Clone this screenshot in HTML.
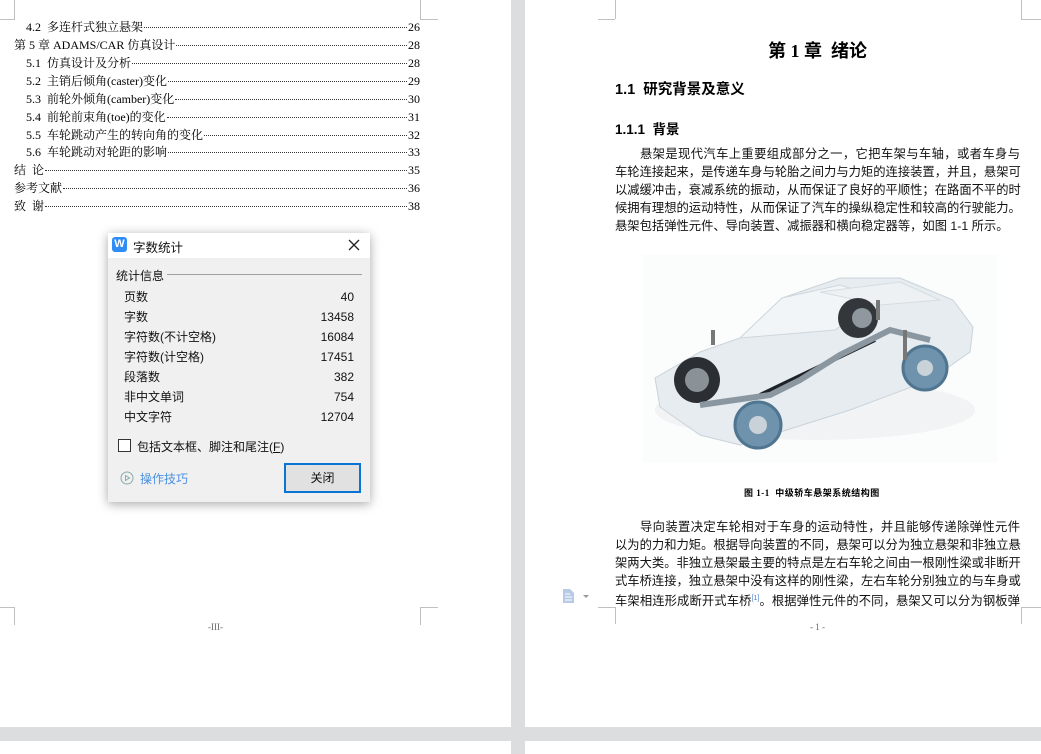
<!DOCTYPE html>
<html><head><meta charset="utf-8"><style>
*{margin:0;padding:0;box-sizing:border-box}
body{width:1041px;height:754px;overflow:hidden;background:#fff;position:relative;font-family:"Liberation Serif","Noto Serif CJK SC","Noto Sans CJK SC",serif;color:#000}
.a{position:absolute}
.ln{position:absolute;background:#c0c0c0}
.toc{position:absolute;font-size:12px;line-height:18px;height:18px;display:flex;align-items:baseline;white-space:nowrap}
.toc .d{flex:1;border-bottom:1px dotted #333;margin:0 1px;transform:translateY(-3px)}
.bl{position:absolute;left:615px;width:405px;font-size:12.3px;line-height:18px;height:18px;white-space:nowrap;text-align:justify;text-align-last:justify;font-family:"Liberation Sans","Noto Sans CJK SC",sans-serif;color:#111}
.dlg{position:absolute;left:108px;top:233px;width:262px;height:269px;background:#f0f0f0;box-shadow:0 2px 10px rgba(0,0,0,.35);font-family:"Liberation Sans","Noto Sans CJK SC",sans-serif;font-size:12px;color:#111}
.row{position:absolute;left:16px;width:230px;display:flex;justify-content:space-between;font-size:12px;line-height:14px}
</style></head><body>
<!-- gray separators -->
<div class="a" style="left:511px;top:0;width:14px;height:754px;background:#dcdddf"></div>
<div class="a" style="left:0;top:727px;width:1041px;height:14px;background:#dcdddf"></div>

<!-- left page corner marks -->
<div class="ln" style="left:0;top:19px;width:15px;height:1px"></div>
<div class="ln" style="left:14px;top:0;width:1px;height:19px"></div>
<div class="ln" style="left:420px;top:19px;width:18px;height:1px"></div>
<div class="ln" style="left:420px;top:0;width:1px;height:19px"></div>
<div class="ln" style="left:0;top:607px;width:15px;height:1px"></div>
<div class="ln" style="left:14px;top:607px;width:1px;height:18px"></div>
<div class="ln" style="left:420px;top:607px;width:18px;height:1px"></div>
<div class="ln" style="left:420px;top:607px;width:1px;height:18px"></div>
<div class="a" style="left:208px;top:622px;font-size:9px;color:#666">-III-</div>

<!-- TOC -->
<div class="toc" style="left:26px;top:18px;width:394px"><span>4.2&nbsp; 多连杆式独立悬架</span><span class="d"></span><span>26</span></div>
<div class="toc" style="left:14px;top:36px;width:406px"><span>第 5 章 ADAMS/CAR 仿真设计</span><span class="d"></span><span>28</span></div>
<div class="toc" style="left:26px;top:54px;width:394px"><span>5.1&nbsp; 仿真设计及分析</span><span class="d"></span><span>28</span></div>
<div class="toc" style="left:26px;top:72px;width:394px"><span>5.2&nbsp; 主销后倾角(caster)变化</span><span class="d"></span><span>29</span></div>
<div class="toc" style="left:26px;top:90px;width:394px"><span>5.3&nbsp; 前轮外倾角(camber)变化</span><span class="d"></span><span>30</span></div>
<div class="toc" style="left:26px;top:108px;width:394px"><span>5.4&nbsp; 前轮前束角(toe)的变化</span><span class="d"></span><span>31</span></div>
<div class="toc" style="left:26px;top:126px;width:394px"><span>5.5&nbsp; 车轮跳动产生的转向角的变化</span><span class="d"></span><span>32</span></div>
<div class="toc" style="left:26px;top:143px;width:394px"><span>5.6&nbsp; 车轮跳动对轮距的影响</span><span class="d"></span><span>33</span></div>
<div class="toc" style="left:14px;top:161px;width:406px"><span>结&nbsp; 论</span><span class="d"></span><span>35</span></div>
<div class="toc" style="left:14px;top:179px;width:406px"><span>参考文献</span><span class="d"></span><span>36</span></div>
<div class="toc" style="left:14px;top:197px;width:406px"><span>致&nbsp; 谢</span><span class="d"></span><span>38</span></div>

<!-- Dialog -->
<div class="dlg">
  <div class="a" style="left:0;top:0;width:262px;height:25px;background:#fff"></div>
  <div class="a" style="left:4px;top:4px;width:15px;height:15px;background:#2f8cf4;border-radius:3px;color:#fff;font-size:11px;font-weight:bold;line-height:15px;text-align:center;font-family:'Liberation Sans',sans-serif">W</div>
  <div class="a" style="left:25px;top:4px;font-size:12.5px">字数统计</div>
  <svg class="a" style="left:240px;top:6px" width="12" height="12"><path d="M1 1L11 11M11 1L1 11" stroke="#222" stroke-width="1.3"/></svg>
  <div class="a" style="left:8px;top:34px;font-size:12px">统计信息</div>
  <div class="a" style="left:59px;top:41px;width:195px;height:1px;background:#a0a0a0"></div>
  <div class="row" style="top:57px"><span>页数</span><span>40</span></div>
  <div class="row" style="top:77px"><span>字数</span><span>13458</span></div>
  <div class="row" style="top:97px"><span>字符数(不计空格)</span><span>16084</span></div>
  <div class="row" style="top:117px"><span>字符数(计空格)</span><span>17451</span></div>
  <div class="row" style="top:137px"><span>段落数</span><span>382</span></div>
  <div class="row" style="top:157px"><span>非中文单词</span><span>754</span></div>
  <div class="row" style="top:177px"><span>中文字符</span><span>12704</span></div>
  <div class="a" style="left:10px;top:206px;width:13px;height:13px;border:1px solid #333;background:#fff"></div>
  <div class="a" style="left:29px;top:205px;font-size:12px">包括文本框、脚注和尾注(<u>F</u>)</div>
  <svg class="a" style="left:12px;top:238px" width="14" height="14"><circle cx="7" cy="7" r="6" fill="none" stroke="#8aa" stroke-width="1"/><path d="M5.5 4.5L9.5 7L5.5 9.5Z" fill="none" stroke="#8aa"/></svg>
  <div class="a" style="left:32px;top:237px;font-size:12px;color:#4a90e2">操作技巧</div>
  <div class="a" style="left:176px;top:230px;width:77px;height:30px;border:2px solid #0a74d4;background:#e1e1e1;text-align:center;line-height:26px;font-size:12px">关闭</div>
</div>

<!-- right page corner marks -->
<div class="ln" style="left:598px;top:19px;width:17px;height:1px"></div>
<div class="ln" style="left:615px;top:0;width:1px;height:19px"></div>
<div class="ln" style="left:1021px;top:19px;width:20px;height:1px"></div>
<div class="ln" style="left:1021px;top:0;width:1px;height:19px"></div>
<div class="ln" style="left:598px;top:607px;width:17px;height:1px"></div>
<div class="ln" style="left:615px;top:607px;width:1px;height:17px"></div>
<div class="ln" style="left:1021px;top:607px;width:20px;height:1px"></div>
<div class="ln" style="left:1021px;top:607px;width:1px;height:17px"></div>
<div class="a" style="left:810px;top:622px;font-size:9px;color:#666">- 1 -</div>
<svg class="a" style="left:562px;top:588px" width="30" height="16"><path d="M1 1H8L12 5V15H1Z" fill="#b7cbe6"/><path d="M3 6H8M3 9H10M3 12H10" stroke="#fff" stroke-width="1"/><path d="M21 7H27L24 10Z" fill="#999"/></svg>

<div class="a" style="left:768px;top:37px;font-size:18px;font-weight:bold;font-family:'Liberation Serif','Noto Sans CJK SC',serif">第 1 章&nbsp; 绪论</div>
<div class="a" style="left:615px;top:78px;font-size:14.5px;font-weight:bold;font-family:'Liberation Sans','Noto Sans CJK SC',sans-serif">1.1&nbsp; 研究背景及意义</div>
<div class="a" style="left:615px;top:118px;font-size:13.5px;font-weight:bold;font-family:'Liberation Sans','Noto Sans CJK SC',sans-serif">1.1.1&nbsp; 背景</div>

<div class="bl" style="top:145px;left:640px;width:380px">悬架是现代汽车上重要组成部分之一，它把车架与车轴，或者车身与</div>
<div class="bl" style="top:163px">车轮连接起来，是传递车身与轮胎之间力与力矩的连接装置，并且，悬架可</div>
<div class="bl" style="top:181px">以减缓冲击，衰减系统的振动，从而保证了良好的平顺性；在路面不平的时</div>
<div class="bl" style="top:199px">候拥有理想的运动特性，从而保证了汽车的操纵稳定性和较高的行驶能力。</div>
<div class="bl" style="top:217px;text-align-last:left;width:auto">悬架包括弹性元件、导向装置、减振器和横向稳定器等，如图 1-1 所示。</div>

<!-- car image -->
<svg class="a" style="left:643px;top:255px" width="354" height="208" viewBox="643 255 354 208">
<rect x="643" y="255" width="354" height="208" fill="#fbfcfc"/>
<ellipse cx="815" cy="410" rx="160" ry="30" fill="#f1f3f4"/>
<path d="M660 407 L655 378 L700 352 L740 338 L782 298 L840 278 L900 278 L953 300 L973 327 L970 352 L930 380 L850 410 L780 432 L740 445 L700 435 Z" fill="#e6ecf0" stroke="#c9d3da" stroke-width="1"/>
<path d="M740 338 L782 298 L840 285 L880 298 L835 330 Z" fill="#f2f5f7" stroke="#cfd8de"/>
<path d="M820 292 L900 282 L940 300 L880 305Z" fill="#edf1f4" stroke="#d6dde2"/>
<circle cx="697" cy="380" r="23" fill="#2b2f33"/><circle cx="697" cy="380" r="12" fill="#8a9298"/>
<circle cx="858" cy="318" r="20" fill="#33373b"/><circle cx="862" cy="318" r="10" fill="#8f989e"/>
<path d="M760 395 L875 340" stroke="#1e2226" stroke-width="4"/>
<path d="M700 405 L770 395 L800 380 L840 355 L890 330 L930 340" stroke="#8a96a0" stroke-width="6" fill="none"/>
<circle cx="758" cy="425" r="23" fill="#6f93ad" stroke="#4f7590" stroke-width="3"/><circle cx="758" cy="425" r="9" fill="#c8d2d8"/>
<circle cx="925" cy="368" r="22" fill="#6f93ad" stroke="#4f7590" stroke-width="3"/><circle cx="925" cy="368" r="8" fill="#c8d2d8"/>
<path d="M713 345 V330 M878 320 V300 M905 360 V330" stroke="#777" stroke-width="4"/>
</svg>
<div class="a" style="left:744px;top:486px;font-size:9px;font-weight:bold;font-family:'Liberation Serif','Noto Sans CJK SC',serif;letter-spacing:.5px">图 1-1&nbsp; 中级轿车悬架系统结构图</div>

<div class="bl" style="top:518px;left:640px;width:380px">导向装置决定车轮相对于车身的运动特性，并且能够传递除弹性元件</div>
<div class="bl" style="top:536px">以为的力和力矩。根据导向装置的不同，悬架可以分为独立悬架和非独立悬</div>
<div class="bl" style="top:554px">架两大类。非独立悬架最主要的特点是左右车轮之间由一根刚性梁或非断开</div>
<div class="bl" style="top:572px">式车桥连接，独立悬架中没有这样的刚性梁，左右车轮分别独立的与车身或</div>
<div class="bl" style="top:590px">车架相连形成断开式车桥<sup style="font-size:7px;color:#4a7fd0">[1]</sup>。根据弹性元件的不同，悬架又可以分为钢板弹</div>
</body></html>
